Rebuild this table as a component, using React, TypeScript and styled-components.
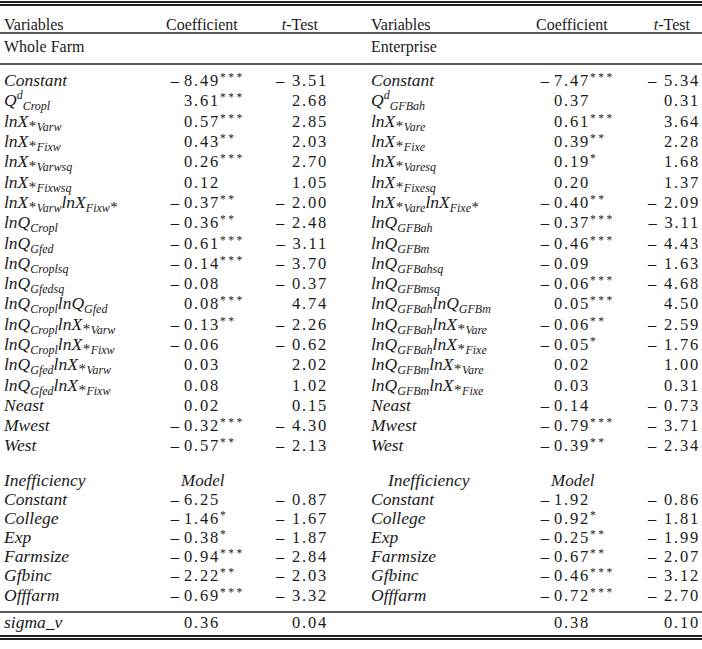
import React from 'react';
import styled, { createGlobalStyle } from 'styled-components';

const Global = createGlobalStyle`
  html, body { margin: 0; padding: 0; background: #ffffff; }
  body {
    color: #1a1a1a;
    font-family: "Liberation Serif", "Times New Roman", serif;
    font-size: 16px;
  }
`;

const Table = styled.div`
  width: 702px;
  display: flex;
  flex-direction: column;
`;

const DoubleRule = styled.div<{ $mt: number }>`
  margin-top: ${(p) => p.$mt}px;
  height: 1px;
  border-top: 2px solid #1e1e1e;
  border-bottom: 2px solid #1e1e1e;
`;

const Rule = styled.div<{ $mt?: number }>`
  margin-top: ${(p) => p.$mt ?? 0}px;
  height: 0;
  border-top: 2px solid #5a5a5a;
`;

const Row = styled.div<{ $h: number; $end?: boolean; $pt?: number; $pb?: number }>`
  display: flex;
  box-sizing: content-box;
  height: ${(p) => p.$h}px;
  padding-top: ${(p) => p.$pt ?? 0}px;
  padding-bottom: ${(p) => p.$pb ?? 0}px;
  align-items: ${(p) => (p.$end ? 'flex-end' : 'center')};
`;

const Section = styled.div<{ $mt: number }>`
  display: flex;
  flex-direction: column;
  margin-top: ${(p) => p.$mt}px;
`;

const Half = styled.div<{ $side: 'l' | 'r'; $lh?: number }>`
  display: grid;
  align-items: baseline;
  box-sizing: border-box;
  line-height: ${(p) => p.$lh ?? 18}px;
  ${(p) =>
    p.$side === 'l'
      ? `width: 368px; padding-left: 4px; grid-template-columns: 162px 18px 78px 66px;`
      : `flex: 1; padding-left: 3px; grid-template-columns: 165px 18px 78px 68px;`}
`;

const HeadCell = styled.div<{ $span?: number; $right?: boolean }>`
  grid-column: span ${(p) => p.$span ?? 1};
  font-size: 16px;
  white-space: nowrap;
  text-align: ${(p) => (p.$right ? 'right' : 'left')};
  padding-right: ${(p) => (p.$right ? 10 : 0)}px;
`;

const LabelCell = styled.div<{ $indent?: number }>`
  font-style: italic;
  font-size: 17.5px;
  white-space: nowrap;
  padding-left: ${(p) => p.$indent ?? 0}px;
`;

const Sub = styled.sub`
  font-size: 12px;
  vertical-align: -4px;
  line-height: 0;
`;

const Sup = styled.sup`
  font-size: 12px;
  vertical-align: 7px;
  line-height: 0;
`;

const Ast = styled.span`
  font-style: normal;
  font-size: 15px;
  vertical-align: -4px;
  line-height: 0;
  margin: 0 0.5px;
`;

const SignCell = styled.div`
  text-align: right;
  padding-right: 5px;
  font-size: 16.5px;
`;

const NumCell = styled.div`
  font-size: 16.5px;
  letter-spacing: 1.8px;
  white-space: nowrap;
`;

const TCell = styled.div`
  font-size: 16.5px;
  letter-spacing: 1.8px;
  text-align: right;
  white-space: nowrap;
`;

const ModelCell = styled.div`
  font-style: italic;
  font-size: 17px;
  margin-left: -3px;
`;

const Stars = styled.span`
  font-size: 11.5px;
  letter-spacing: 2.4px;
  vertical-align: 5px;
  line-height: 0;
`;

const TItalic = styled.span`
  font-style: italic;
`;

type Entry = { label?: React.ReactNode; coef?: string; t?: string; indent?: number };

const A = () => <Ast>*</Ast>;

const lnX = (s: string) => (
  <>
    lnX<A />
    <Sub>{s}</Sub>
  </>
);
const lnQ = (s: string) => (
  <>
    lnQ<Sub>{s}</Sub>
  </>
);
const cross = (a: string, b: string) => (
  <>
    {lnX(a)}lnX<Sub>{b}</Sub>
    <A />
  </>
);

const upperLeft: Entry[] = [
  { label: 'Constant', coef: '-8.49***', t: '-3.51' },
  { label: <>Q<Sup>d</Sup><Sub>Cropl</Sub></>, coef: '3.61***', t: '2.68' },
  { label: lnX('Varw'), coef: '0.57***', t: '2.85' },
  { label: lnX('Fixw'), coef: '0.43**', t: '2.03' },
  { label: lnX('Varwsq'), coef: '0.26***', t: '2.70' },
  { label: lnX('Fixwsq'), coef: '0.12', t: '1.05' },
  { label: cross('Varw', 'Fixw'), coef: '-0.37**', t: '-2.00' },
  { label: lnQ('Cropl'), coef: '-0.36**', t: '-2.48' },
  { label: lnQ('Gfed'), coef: '-0.61***', t: '-3.11' },
  { label: lnQ('Croplsq'), coef: '-0.14***', t: '-3.70' },
  { label: lnQ('Gfedsq'), coef: '-0.08', t: '-0.37' },
  { label: <>{lnQ('Cropl')}{lnQ('Gfed')}</>, coef: '0.08***', t: '4.74' },
  { label: <>{lnQ('Cropl')}{lnX('Varw')}</>, coef: '-0.13**', t: '-2.26' },
  { label: <>{lnQ('Cropl')}{lnX('Fixw')}</>, coef: '-0.06', t: '-0.62' },
  { label: <>{lnQ('Gfed')}{lnX('Varw')}</>, coef: '0.03', t: '2.02' },
  { label: <>{lnQ('Gfed')}{lnX('Fixw')}</>, coef: '0.08', t: '1.02' },
  { label: 'Neast', coef: '0.02', t: '0.15' },
  { label: 'Mwest', coef: '-0.32***', t: '-4.30' },
  { label: 'West', coef: '-0.57**', t: '-2.13' },
];

const upperRight: Entry[] = [
  { label: 'Constant', coef: '-7.47***', t: '-5.34' },
  { label: <>Q<Sup>d</Sup><Sub>GFBah</Sub></>, coef: '0.37', t: '0.31' },
  { label: lnX('Vare'), coef: '0.61***', t: '3.64' },
  { label: lnX('Fixe'), coef: '0.39**', t: '2.28' },
  { label: lnX('Varesq'), coef: '0.19*', t: '1.68' },
  { label: lnX('Fixesq'), coef: '0.20', t: '1.37' },
  { label: cross('Vare', 'Fixe'), coef: '-0.40**', t: '-2.09' },
  { label: lnQ('GFBah'), coef: '-0.37***', t: '-3.11' },
  { label: lnQ('GFBm'), coef: '-0.46***', t: '-4.43' },
  { label: lnQ('GFBahsq'), coef: '-0.09', t: '-1.63' },
  { label: lnQ('GFBmsq'), coef: '-0.06***', t: '-4.68' },
  { label: <>{lnQ('GFBah')}{lnQ('GFBm')}</>, coef: '0.05***', t: '4.50' },
  { label: <>{lnQ('GFBah')}{lnX('Vare')}</>, coef: '-0.06**', t: '-2.59' },
  { label: <>{lnQ('GFBah')}{lnX('Fixe')}</>, coef: '-0.05*', t: '-1.76' },
  { label: <>{lnQ('GFBm')}{lnX('Vare')}</>, coef: '0.02', t: '1.00' },
  { label: <>{lnQ('GFBm')}{lnX('Fixe')}</>, coef: '0.03', t: '0.31' },
  { label: 'Neast', coef: '-0.14', t: '-0.73' },
  { label: 'Mwest', coef: '-0.79***', t: '-3.71' },
  { label: 'West', coef: '-0.39**', t: '-2.34' },
];

const lowerLeft: Entry[] = [
  { label: 'Constant', coef: '-6.25', t: '-0.87' },
  { label: 'College', coef: '-1.46*', t: '-1.67' },
  { label: 'Exp', coef: '-0.38*', t: '-1.87' },
  { label: 'Farmsize', coef: '-0.94***', t: '-2.84' },
  { label: 'Gfbinc', coef: '-2.22**', t: '-2.03' },
  { label: 'Offfarm', coef: '-0.69***', t: '-3.32' },
];

const lowerRight: Entry[] = [
  { label: 'Constant', coef: '-1.92', t: '-0.86' },
  { label: 'College', coef: '-0.92*', t: '-1.81' },
  { label: 'Exp', coef: '-0.25**', t: '-1.99' },
  { label: 'Farmsize', coef: '-0.67**', t: '-2.07' },
  { label: 'Gfbinc', coef: '-0.46***', t: '-3.12' },
  { label: 'Offfarm', coef: '-0.72***', t: '-2.70' },
];

const DASH = '\u2013';

function Coef({ v }: { v?: string }) {
  if (!v) return (<><SignCell /><NumCell /></>);
  const neg = v.startsWith('-');
  const body = neg ? v.slice(1) : v;
  const m = body.match(/^([^*]+)(\**)$/);
  const num = m ? m[1] : body;
  const stars = m ? m[2] : '';
  return (
    <>
      <SignCell>{neg ? DASH : ''}</SignCell>
      <NumCell>
        {num}
        {stars && <Stars>{stars}</Stars>}
      </NumCell>
    </>
  );
}

function TVal({ v }: { v?: string }) {
  if (!v) return <TCell />;
  const neg = v.startsWith('-');
  return <TCell>{neg ? `${DASH} ${v.slice(1)}` : v}</TCell>;
}

function Side({ side, e }: { side: 'l' | 'r'; e: Entry }) {
  return (
    <Half $side={side}>
      <LabelCell $indent={e.indent}>{e.label}</LabelCell>
      <Coef v={e.coef} />
      <TVal v={e.t} />
    </Half>
  );
}

function HeaderSide({ side }: { side: 'l' | 'r' }) {
  return (
    <Half $side={side} $lh={15}>
      <HeadCell>Variables</HeadCell>
      <HeadCell $span={2}>Coefficient</HeadCell>
      <HeadCell $right>
        <TItalic>t</TItalic>-Test
      </HeadCell>
    </Half>
  );
}

export default function App() {
  return (
    <>
      <Global />
      <Table>
        <DoubleRule $mt={1} />
        <Row $h={26} $end>
          <HeaderSide side="l" />
          <HeaderSide side="r" />
        </Row>
        <Rule />
        <Row $h={18} $pt={4} $pb={7}>
          <Half $side="l">
            <HeadCell $span={4}>Whole Farm</HeadCell>
          </Half>
          <Half $side="r">
            <HeadCell $span={4}>Enterprise</HeadCell>
          </Half>
        </Row>
        <Rule />
        <Section $mt={5.5}>
          {upperLeft.map((e, i) => (
            <Row key={i} $h={20.3}>
              <Side side="l" e={e} />
              <Side side="r" e={upperRight[i]} />
            </Row>
          ))}
        </Section>
        <Section $mt={14.3}>
          <Row $h={19.2}>
            <Half $side="l">
              <LabelCell>Inefficiency</LabelCell>
              <SignCell />
              <ModelCell>Model</ModelCell>
            </Half>
            <Half $side="r">
              <LabelCell $indent={17}>Inefficiency</LabelCell>
              <SignCell />
              <ModelCell>Model</ModelCell>
            </Half>
          </Row>
          {lowerLeft.map((e, i) => (
            <Row key={i} $h={19.2}>
              <Side side="l" e={e} />
              <Side side="r" e={lowerRight[i]} />
            </Row>
          ))}
        </Section>
        <Rule $mt={6.6} />
        <Row $h={19}>
          <Side side="l" e={{ label: 'sigma_v', coef: '0.36', t: '0.04' }} />
          <Side side="r" e={{ coef: '0.38', t: '0.10' }} />
        </Row>
        <DoubleRule $mt={3} />
      </Table>
    </>
  );
}
